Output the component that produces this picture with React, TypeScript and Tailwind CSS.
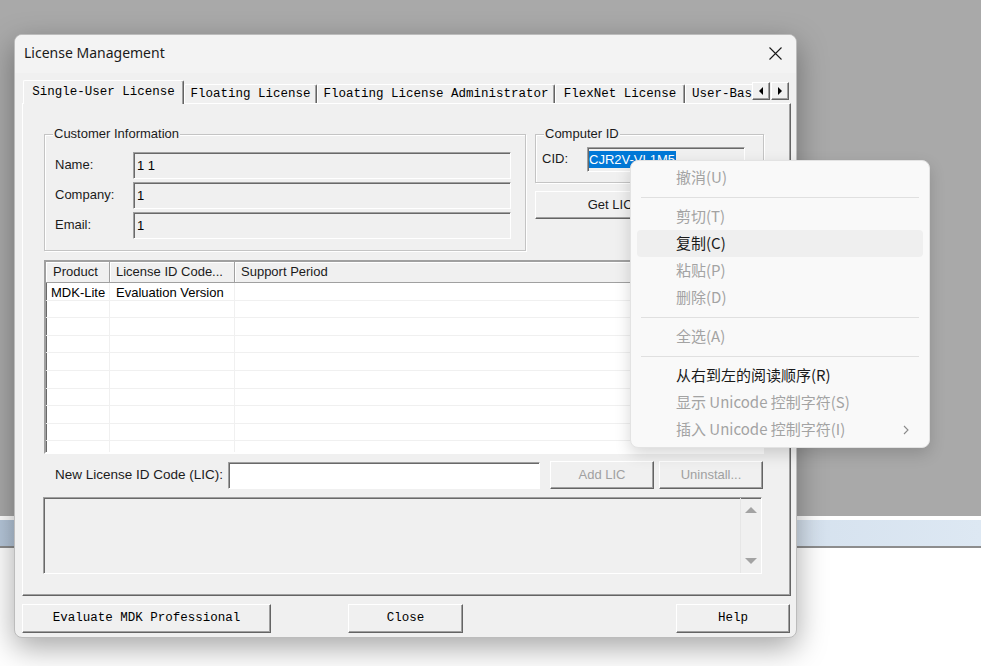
import React from "react";

const sans = "font-['Liberation_Sans',Arial,sans-serif]";
const mono = "font-['Liberation_Mono','Courier_New',monospace]";

// classic 3D edges
const raised =
  "border border-t-white border-l-white border-r-[#646464] border-b-[#646464] shadow-[inset_-1px_-1px_0_#a0a0a0] bg-[#f0f0f0]";
const sunken =
  "border border-t-[#a0a0a0] border-l-[#a0a0a0] border-r-white border-b-white shadow-[inset_1px_1px_0_#696969]";
const etched = "border border-[#c4c4c4] shadow-[inset_1px_1px_0_#ffffff,1px_1px_0_#ffffff]";

interface MenuItem {
  label: string;
  enabled?: boolean;
  hover?: boolean;
  sub?: boolean;
  sep?: boolean;
}

const menuItems: MenuItem[] = [
  { label: "撤消(U)" },
  { label: "", sep: true },
  { label: "剪切(T)" },
  { label: "复制(C)", enabled: true, hover: true },
  { label: "粘贴(P)" },
  { label: "删除(D)" },
  { label: "", sep: true },
  { label: "全选(A)" },
  { label: "", sep: true },
  { label: "从右到左的阅读顺序(R)", enabled: true },
  { label: "显示 Unicode 控制字符(S)" },
  { label: "插入 Unicode 控制字符(I)", sub: true },
];

const tabs = [
  { name: "Floating License", w: "w-[133px]" },
  { name: "Floating License Administrator", w: "w-[238px]" },
  { name: "FlexNet License", w: "w-[130px]" },
];

const Tri: React.FC<{ dir: "l" | "r" | "u" | "d"; color: string }> = ({ dir, color }) => {
  const pts =
    dir === "l" ? "5,0 5,8 1,4" : dir === "r" ? "1,0 1,8 5,4" : dir === "u" ? "0,6 12,6 6,0" : "0,0 12,0 6,6";
  const vb = dir === "l" || dir === "r" ? "0 0 6 8" : "0 0 12 6";
  const size = dir === "l" || dir === "r" ? { w: 6, h: 8 } : { w: 12, h: 6 };
  return (
    <svg width={size.w} height={size.h} viewBox={vb}>
      <polygon points={pts} fill={color} />
    </svg>
  );
};

const Field: React.FC<{ label: string; value: string }> = ({ label, value }) => (
  <div className="flex items-center h-[27px]">
    <span className="w-[78px] text-[13px] text-[#1b1b1b] -mt-[2px]">{label}</span>
    <div className={`w-[378px] h-[27px] ${sunken} bg-[#f0f0f0] pl-[3px] pt-[3px] text-[13px] text-black`}>
      {value}
    </div>
  </div>
);

const App: React.FC = () => {
  return (
    <div className={`relative w-[981px] h-[666px] overflow-hidden ${sans}`}>
      {/* desktop behind */}
      <div className="flex flex-col h-full">
        <div className="h-[516px] bg-[#a9a9a9]" />
        <div className="h-[4px] bg-white" />
        <div className="h-[26px] bg-gradient-to-r from-[#b6c7da] to-[#dde8f3]" />
        <div className="h-[2px] bg-[#8d8d8d]" />
        <div className="flex-1 bg-white" />
      </div>

      {/* dialog window */}
      <div className="absolute left-[14px] top-[34px] w-[783px] h-[604px] rounded-[8px] bg-[#f0f0f0] border border-[#bcbcbc] shadow-[0_10px_30px_rgba(0,0,0,0.35)] overflow-hidden flex flex-col">
        <div className="h-[38px] bg-[#f3f3f3] flex items-center justify-between pl-[9px] pr-[14px] pb-[3px]">
          <span className="text-[14px] text-[#1a1a1a] font-['Segoe_UI','Noto_Sans',sans-serif]">
            License Management
          </span>
          <svg width="13" height="13" viewBox="0 0 13 13" className="mt-[1px]">
            <path d="M0.5 0.5L12.5 12.5M12.5 0.5L0.5 12.5" stroke="#1a1a1a" strokeWidth="1.1" />
          </svg>
        </div>

        <div className="flex-1 pt-[7px] pl-[7px] pr-[5px]">
          {/* tab strip */}
          <div className={`relative z-10 flex items-end h-[23px] pl-[1px] ${mono} text-[12.5px] text-black`}>
            <div className="w-[161px] h-[24px] -mb-[1px] bg-[#f0f0f0] border border-b-0 border-t-white border-l-white border-r-[#646464] shadow-[inset_-1px_0_0_#a0a0a0] rounded-t-[2px] flex items-center justify-center">
              Single-User License
            </div>
            {tabs.map((t) => (
              <div
                key={t.name}
                className={`${t.w} h-[19px] border border-b-0 border-t-white border-l-white border-r-[#646464] shadow-[inset_-1px_0_0_#a0a0a0] rounded-t-[2px] flex items-center justify-center`}
              >
                {t.name}
              </div>
            ))}
            <div className="w-[67px] h-[19px] border-t border-l border-t-white border-l-white pl-[6px] whitespace-nowrap flex items-center">
              User-Bas
            </div>
            <div className={`self-start mt-[2px] w-[18px] h-[18px] ${raised} flex items-center justify-center`}>
              <Tri dir="l" color="#000" />
            </div>
            <div className={`self-start mt-[2px] w-[18px] h-[18px] ml-[1px] ${raised} flex items-center justify-center`}>
              <Tri dir="r" color="#000" />
            </div>
          </div>

          {/* tab panel */}
          <div className="w-[769px] h-[493px] border border-t-white border-l-white border-r-[#646464] border-b-[#646464] shadow-[inset_-1px_-1px_0_#a0a0a0] pl-[21px] pt-[30px] text-[13px] text-[#1b1b1b]">
            <div className="flex gap-[9px]">
              {/* customer information */}
              <div className={`relative w-[482px] h-[117px] ${etched} pl-[10px] pt-[17px] flex flex-col gap-[3px]`}>
                <span className="absolute -top-[10px] left-[8px] bg-[#f0f0f0] px-[1px] text-[13px] leading-[18px]">
                  Customer Information
                </span>
                <Field label="Name:" value="1 1" />
                <Field label="Company:" value="1" />
                <Field label="Email:" value="1" />
              </div>

              {/* computer id */}
              <div className="w-[229px] flex flex-col">
                <div className={`relative h-[49px] ${etched} pl-[6px] pt-[12px] flex items-start`}>
                  <span className="absolute -top-[10px] left-[8px] bg-[#f0f0f0] px-[1px] leading-[18px]">
                    Computer ID
                  </span>
                  <span className="w-[45px] h-[23px] flex items-center">CID:</span>
                  <div className={`w-[158px] h-[25px] ${sunken} bg-[#f0f0f0] pl-[1px] flex items-center`}>
                    <span className="bg-[#0078d7] text-white leading-[17px] pr-[1px]">CJR2V-VL1M5</span>
                  </div>
                </div>
                <button className={`mt-[8px] h-[28px] w-full ${raised} text-[13px] text-[#1b1b1b]`}>
                  Get LIC via Internet...
                </button>
              </div>
            </div>

            {/* list view */}
            <div className={`mt-[9px] w-[720px] h-[194px] ${sunken} border-2 border-t-[#a0a0a0] border-l-[#a0a0a0] bg-white overflow-hidden`}>
              <div className="flex h-[21px] bg-[#f0f0f0] border-b border-[#a0a0a0]">
                <div className="w-[64px] border-r border-[#a0a0a0] shadow-[inset_1px_1px_0_#ffffff] pl-[7px] flex items-center">
                  Product
                </div>
                <div className="w-[125px] border-r border-[#a0a0a0] shadow-[inset_1px_1px_0_#ffffff] pl-[6px] flex items-center">
                  License ID Code...
                </div>
                <div className="flex-1 shadow-[inset_1px_1px_0_#ffffff] pl-[6px] flex items-center">Support Period</div>
              </div>
              {Array.from({ length: 10 }).map((_, i) => (
                <div key={i} className="flex h-[17.6px] border-b border-[#f0f0f0] leading-[19px] text-black">
                  <div className="w-[64px] border-r border-[#f0f0f0] pl-[5px] whitespace-nowrap">
                    {i === 0 ? "MDK-Lite" : ""}
                  </div>
                  <div className="w-[125px] border-r border-[#f0f0f0] pl-[6px] whitespace-nowrap">
                    {i === 0 ? "Evaluation Version" : ""}
                  </div>
                  <div className="flex-1" />
                </div>
              ))}
            </div>

            {/* LIC entry */}
            <div className="mt-[7px] flex items-center h-[28px]">
              <span className="w-[184px] pl-[11px] text-[13.5px]">New License ID Code (LIC):</span>
              <div className={`w-[312px] h-[27px] ${sunken} bg-white`} />
              <button className={`ml-[10px] w-[104px] h-[28px] ${raised} text-[13px] text-[#a0a0a0]`}>Add LIC</button>
              <button className={`ml-[5px] w-[104px] h-[28px] ${raised} text-[13px] text-[#a0a0a0]`}>
                Uninstall...
              </button>
            </div>

            {/* output box */}
            <div className={`mt-[8px] -ml-[1px] w-[719px] h-[77px] ${sunken} bg-[#f0f0f0] flex justify-end`}>
              <div className="w-[21px] border-l border-[#e6e6e6] flex flex-col items-center justify-between pt-[9px] pb-[9px]">
                <Tri dir="u" color="#a3a3a3" />
                <Tri dir="d" color="#a3a3a3" />
              </div>
            </div>
          </div>

          {/* dialog buttons */}
          <div className={`mt-[8px] flex ${mono} text-[12.5px] text-black`}>
            <button className={`w-[249px] h-[29px] ${raised}`}>Evaluate MDK Professional</button>
            <button className={`ml-[77px] w-[115px] h-[29px] ${raised}`}>Close</button>
            <button className={`ml-auto mr-[1px] w-[114px] h-[29px] ${raised}`}>Help</button>
          </div>
        </div>
      </div>

      {/* context menu */}
      <div className="absolute left-[630px] top-[160px] w-[300px] h-[288px] rounded-[8px] bg-[#f9f9f9] border border-[#e3e3e3] shadow-[0_6px_16px_rgba(0,0,0,0.16)] pt-[3px] px-[6px] font-['Segoe_UI','Noto_Sans_CJK_SC',sans-serif] text-[15px]">
        {menuItems.map((m, i) =>
          m.sep ? (
            <div key={i} className="h-[12px] flex items-center px-[4px]">
              <div className="h-px w-full bg-[#e0e0e0]" />
            </div>
          ) : (
            <div
              key={i}
              className={`h-[27px] rounded-[4px] flex items-center pl-[39px] pr-[14px] ${
                m.hover ? "bg-[#efefef]" : ""
              } ${m.enabled ? "text-[#1a1a1a]" : "text-[#a3a3a3]"}`}
            >
              <span className="flex-1">{m.label}</span>
              {m.sub && (
                <svg width="6" height="10" viewBox="0 0 6 10">
                  <path d="M1 1L5 5L1 9" stroke="#8a8a8a" strokeWidth="1.1" fill="none" />
                </svg>
              )}
            </div>
          )
        )}
      </div>
    </div>
  );
};

export default App;
